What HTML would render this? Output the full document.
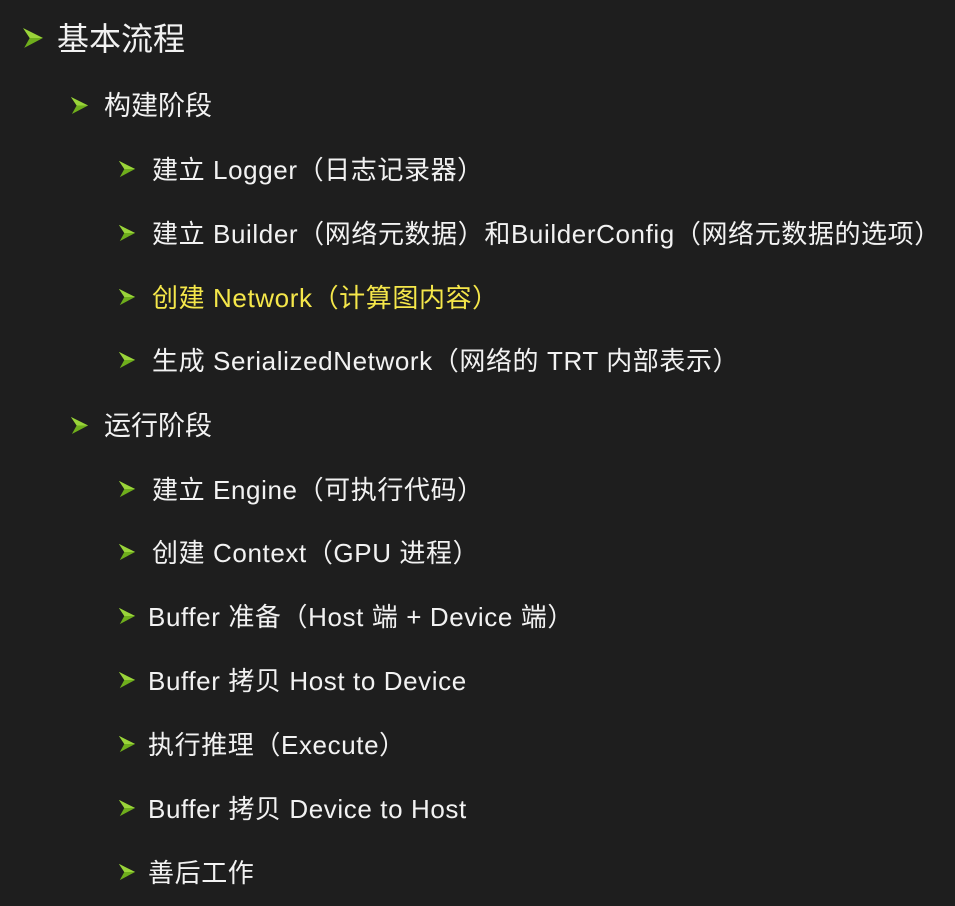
<!DOCTYPE html>
<html><head><meta charset="utf-8"><style>
html,body{margin:0;padding:0;background:#1e1e1e;}
body{width:955px;height:906px;position:relative;overflow:hidden;font-family:"Liberation Sans","Noto Sans CJK SC",sans-serif;color:#f2f2f2;}
.a{position:absolute;}
.t{position:absolute;white-space:nowrap;font-size:26px;line-height:30px;letter-spacing:0.6px;}
</style></head><body>
<svg width="0" height="0" style="position:absolute"><defs>
<symbol id="ar" viewBox="0 0 20 20"><path d="M1 1 L19 10 L2 19 L7 10 Z" fill="#6fae1c"/><path d="M1 1 L7 10 L19 10 Z" fill="#9ad43a"/></symbol>
</defs></svg>

<svg class="a" style="left:22px;top:27px" width="22" height="22"><use href="#ar"/></svg>
<div class="t" style="left:57px;top:21px;font-size:32px;line-height:36px;letter-spacing:0">基本流程</div>

<svg class="a" style="left:70px;top:96px" width="19" height="19"><use href="#ar"/></svg>
<div class="t" style="left:104px;top:91px;font-size:27px;letter-spacing:0">构建阶段</div>

<svg class="a" style="left:118px;top:160px" width="18" height="18"><use href="#ar"/></svg>
<div class="t" style="left:152px;top:155px">建立 Logger（日志记录器）</div>

<svg class="a" style="left:118px;top:224px" width="18" height="18"><use href="#ar"/></svg>
<div class="t" style="left:152px;top:219px">建立 Builder（网络元数据）和BuilderConfig（网络元数据的选项）</div>

<svg class="a" style="left:118px;top:288px" width="18" height="18"><use href="#ar"/></svg>
<div class="t" style="left:152px;top:283px;color:#f5e74a">创建 Network（计算图内容）</div>

<svg class="a" style="left:118px;top:351px" width="18" height="18"><use href="#ar"/></svg>
<div class="t" style="left:152px;top:346px">生成 SerializedNetwork（网络的 TRT 内部表示）</div>

<svg class="a" style="left:70px;top:416px" width="19" height="19"><use href="#ar"/></svg>
<div class="t" style="left:104px;top:411px;font-size:27px;letter-spacing:0">运行阶段</div>

<svg class="a" style="left:118px;top:480px" width="18" height="18"><use href="#ar"/></svg>
<div class="t" style="left:152px;top:475px">建立 Engine（可执行代码）</div>

<svg class="a" style="left:118px;top:543px" width="18" height="18"><use href="#ar"/></svg>
<div class="t" style="left:152px;top:538px">创建 Context（GPU 进程）</div>

<svg class="a" style="left:118px;top:607px" width="18" height="18"><use href="#ar"/></svg>
<div class="t" style="left:148px;top:602px">Buffer 准备（Host 端 + Device 端）</div>

<svg class="a" style="left:118px;top:671px" width="18" height="18"><use href="#ar"/></svg>
<div class="t" style="left:148px;top:666px">Buffer 拷贝 Host to Device</div>

<svg class="a" style="left:118px;top:735px" width="18" height="18"><use href="#ar"/></svg>
<div class="t" style="left:148px;top:730px">执行推理（Execute）</div>

<svg class="a" style="left:118px;top:799px" width="18" height="18"><use href="#ar"/></svg>
<div class="t" style="left:148px;top:794px">Buffer 拷贝 Device to Host</div>

<svg class="a" style="left:118px;top:863px" width="18" height="18"><use href="#ar"/></svg>
<div class="t" style="left:148px;top:858px">善后工作</div>
</body></html>
